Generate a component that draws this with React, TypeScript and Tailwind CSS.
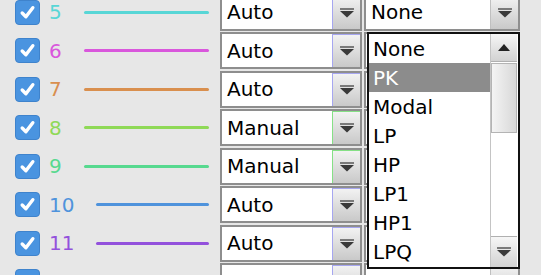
import React from 'react'

interface Channel {
  id: number
  color: string
  mode: string
  filter: string
  tint: string
}

const channels: Channel[] = [
  { id: 5, color: '#58d6d6', mode: 'Auto', filter: 'None', tint: '#a6a6f0' },
  { id: 6, color: '#d957dc', mode: 'Auto', filter: '', tint: '#a6a6f0' },
  { id: 7, color: '#d98f4e', mode: 'Auto', filter: '', tint: '#a6a6f0' },
  { id: 8, color: '#8fd957', mode: 'Manual', filter: '', tint: '#86e086' },
  { id: 9, color: '#57d98f', mode: 'Manual', filter: '', tint: '#86e086' },
  { id: 10, color: '#4f93dc', mode: 'Auto', filter: '', tint: '#a6a6f0' },
  { id: 11, color: '#9351dc', mode: 'Auto', filter: '', tint: '#a6a6f0' },
  { id: 12, color: '#d08fe3', mode: 'Auto', filter: 'None', tint: '#a6a6f0' },
]

const filters = ['None', 'PK', 'Modal', 'LP', 'HP', 'LP1', 'HP1', 'LPQ']

function DownArrow() {
  return (
    <svg width="14" height="10" viewBox="0 0 14 10">
      <rect x="0" y="0" width="14" height="2" fill="#7a7a7a" />
      <polygon points="0,3 14,3 7,9.5" fill="#3a3a3a" />
    </svg>
  )
}

function Check() {
  return (
    <div className="w-[25px] h-[25px] rounded-[4px] bg-[#4a94e0] border border-[#3f83cc] flex items-center justify-center">
      <svg width="17" height="17" viewBox="0 0 16 16">
        <path d="M3 8.5 L6.5 12 L13 3.5" fill="none" stroke="white" strokeWidth="3.2" strokeLinecap="round" strokeLinejoin="round" />
      </svg>
    </div>
  )
}

function Combo({ value, width, tint, dim }: { value: string; width: string; tint: string; dim?: boolean }) {
  return (
    <div className={`flex h-[37px] ${width} border-2 border-[#8e8e8e] bg-white shrink-0`}>
      <div className={`flex-1 flex items-center pl-[5px] text-[20px] ${dim ? 'text-[#b0b0b0]' : 'text-black'}`}>
        {value}
      </div>
      <div
        className="w-[28px] flex items-center justify-center bg-gradient-to-b from-[#f2f2f2] to-[#c9c9c9] border-l border-t"
        style={{ borderColor: tint }}
      >
        <DownArrow />
      </div>
    </div>
  )
}

export default function App() {
  return (
    <div className="relative w-[541px] h-[275px] overflow-hidden bg-[#e7e7e7] font-['DejaVu_Sans',sans-serif]">
      <div className="mt-[-7px] flex flex-col">
        {channels.map((ch) => (
          <div key={ch.id} className="h-[38.5px] flex items-center">
            <div className="w-[209px] flex items-center pl-[15px]">
              <Check />
              <span className="ml-[9px] text-[20px] leading-none" style={{ color: ch.color }}>
                {ch.id}
              </span>
              <div className="ml-[22px] flex-1 h-[3px] rounded-full" style={{ backgroundColor: ch.color }} />
            </div>
            <div className="ml-[11px]">
              <Combo value={ch.mode} width="w-[142px]" tint={ch.tint} dim={ch.id === 12} />
            </div>
            <div className="ml-[2px]">
              <Combo value={ch.filter} width="w-[156px]" tint="#c0c0c0" dim={ch.id === 12} />
            </div>
          </div>
        ))}
      </div>

      {/* open filter list */}
      <div className="absolute left-[367px] top-[32px] w-[153px] h-[237px] border-2 border-[#111] bg-white flex">
        <div className="flex-1 flex flex-col">
          {filters.map((f) => (
            <div
              key={f}
              className={`h-[29px] flex items-center pl-[4px] text-[20px] ${
                f === 'PK' ? 'bg-[#8c8c8c] text-white' : 'text-black'
              }`}
            >
              {f}
            </div>
          ))}
        </div>
        <div className="w-[27px] mr-[1px] flex flex-col border-l border-[#c4c4c4]">
          <div className="h-[28px] flex items-center justify-center bg-gradient-to-b from-[#f6f6f6] to-[#d2d2d2] border-b border-[#b0b0b0]">
            <svg width="12" height="7" viewBox="0 0 12 7">
              <polygon points="6,0 12,7 0,7" fill="#222" />
            </svg>
          </div>
          <div className="h-[70px] mt-[1px] bg-gradient-to-r from-[#f4f4f4] to-[#d8d8d8] border border-[#b4b4b4]" />
          <div className="flex-1" />
          <div className="h-[31px] flex items-center justify-center bg-gradient-to-b from-[#f6f6f6] to-[#d2d2d2] border-t border-[#b0b0b0]">
            <DownArrow />
          </div>
        </div>
      </div>
    </div>
  )
}
